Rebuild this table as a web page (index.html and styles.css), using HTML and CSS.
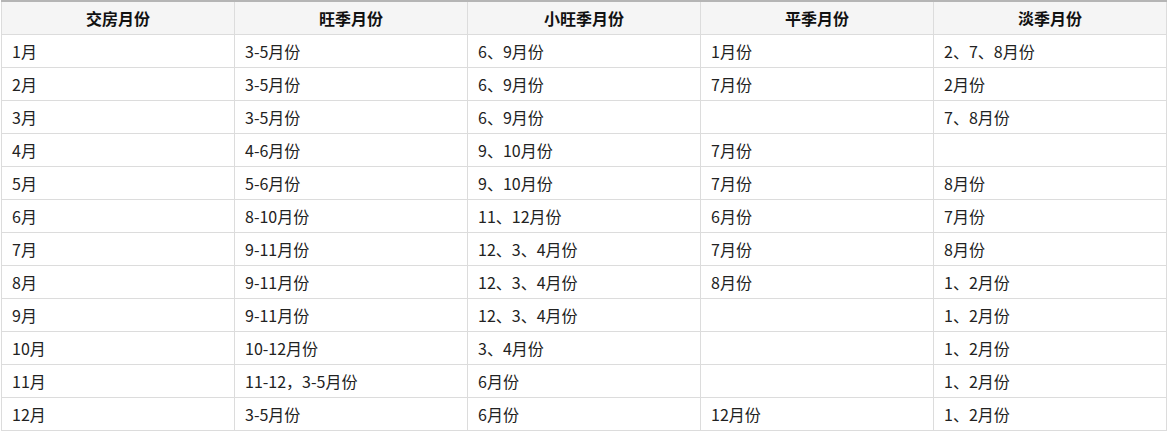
FILE: index.html
```html
<!DOCTYPE html>
<html lang="zh-CN">
<head>
<meta charset="utf-8">
<link rel="stylesheet" href="styles.css">
</head>
<body>
<table class="season-table">
  <thead>
    <tr><th>交房月份</th><th>旺季月份</th><th>小旺季月份</th><th>平季月份</th><th>淡季月份</th></tr>
  </thead>
  <tbody>
    <tr><td>1月</td><td>3-5月份</td><td>6、9月份</td><td>1月份</td><td>2、7、8月份</td></tr>
    <tr><td>2月</td><td>3-5月份</td><td>6、9月份</td><td>7月份</td><td>2月份</td></tr>
    <tr><td>3月</td><td>3-5月份</td><td>6、9月份</td><td></td><td>7、8月份</td></tr>
    <tr><td>4月</td><td>4-6月份</td><td>9、10月份</td><td>7月份</td><td></td></tr>
    <tr><td>5月</td><td>5-6月份</td><td>9、10月份</td><td>7月份</td><td>8月份</td></tr>
    <tr><td>6月</td><td>8-10月份</td><td>11、12月份</td><td>6月份</td><td>7月份</td></tr>
    <tr><td>7月</td><td>9-11月份</td><td>12、3、4月份</td><td>7月份</td><td>8月份</td></tr>
    <tr><td>8月</td><td>9-11月份</td><td>12、3、4月份</td><td>8月份</td><td>1、2月份</td></tr>
    <tr><td>9月</td><td>9-11月份</td><td>12、3、4月份</td><td></td><td>1、2月份</td></tr>
    <tr><td>10月</td><td>10-12月份</td><td>3、4月份</td><td></td><td>1、2月份</td></tr>
    <tr><td>11月</td><td>11-12，3-5月份</td><td>6月份</td><td></td><td>1、2月份</td></tr>
    <tr><td>12月</td><td>3-5月份</td><td>6月份</td><td>12月份</td><td>1、2月份</td></tr>
  </tbody>
</table>
</body>
</html>
```
FILE: styles.css
```css
html, body {
  margin: 0;
  padding: 0;
  background: #ffffff;
}
body {
  padding: 0 0 0 1px;
  font-family: "Microsoft YaHei", "Noto Sans CJK SC", "Noto Sans", sans-serif;
  font-size: 16px;
  color: #222;
}
.season-table {
  border-collapse: collapse;
  width: 1166px;
  table-layout: fixed;
  border-top: 2px solid #b5b5b5;
}
.season-table th,
.season-table td {
  border: 1px solid #dcdcdc;
  height: 33px;
  padding: 0 10px;
  box-sizing: border-box;
  text-align: left;
  vertical-align: middle;
  white-space: nowrap;
  line-height: 20px;
}
.season-table th {
  background: #f5f5f5;
  font-weight: bold;
  text-align: center;
  color: #111;
}
.season-table thead tr th {
  border-top: 2px solid #b5b5b5;
}
```
